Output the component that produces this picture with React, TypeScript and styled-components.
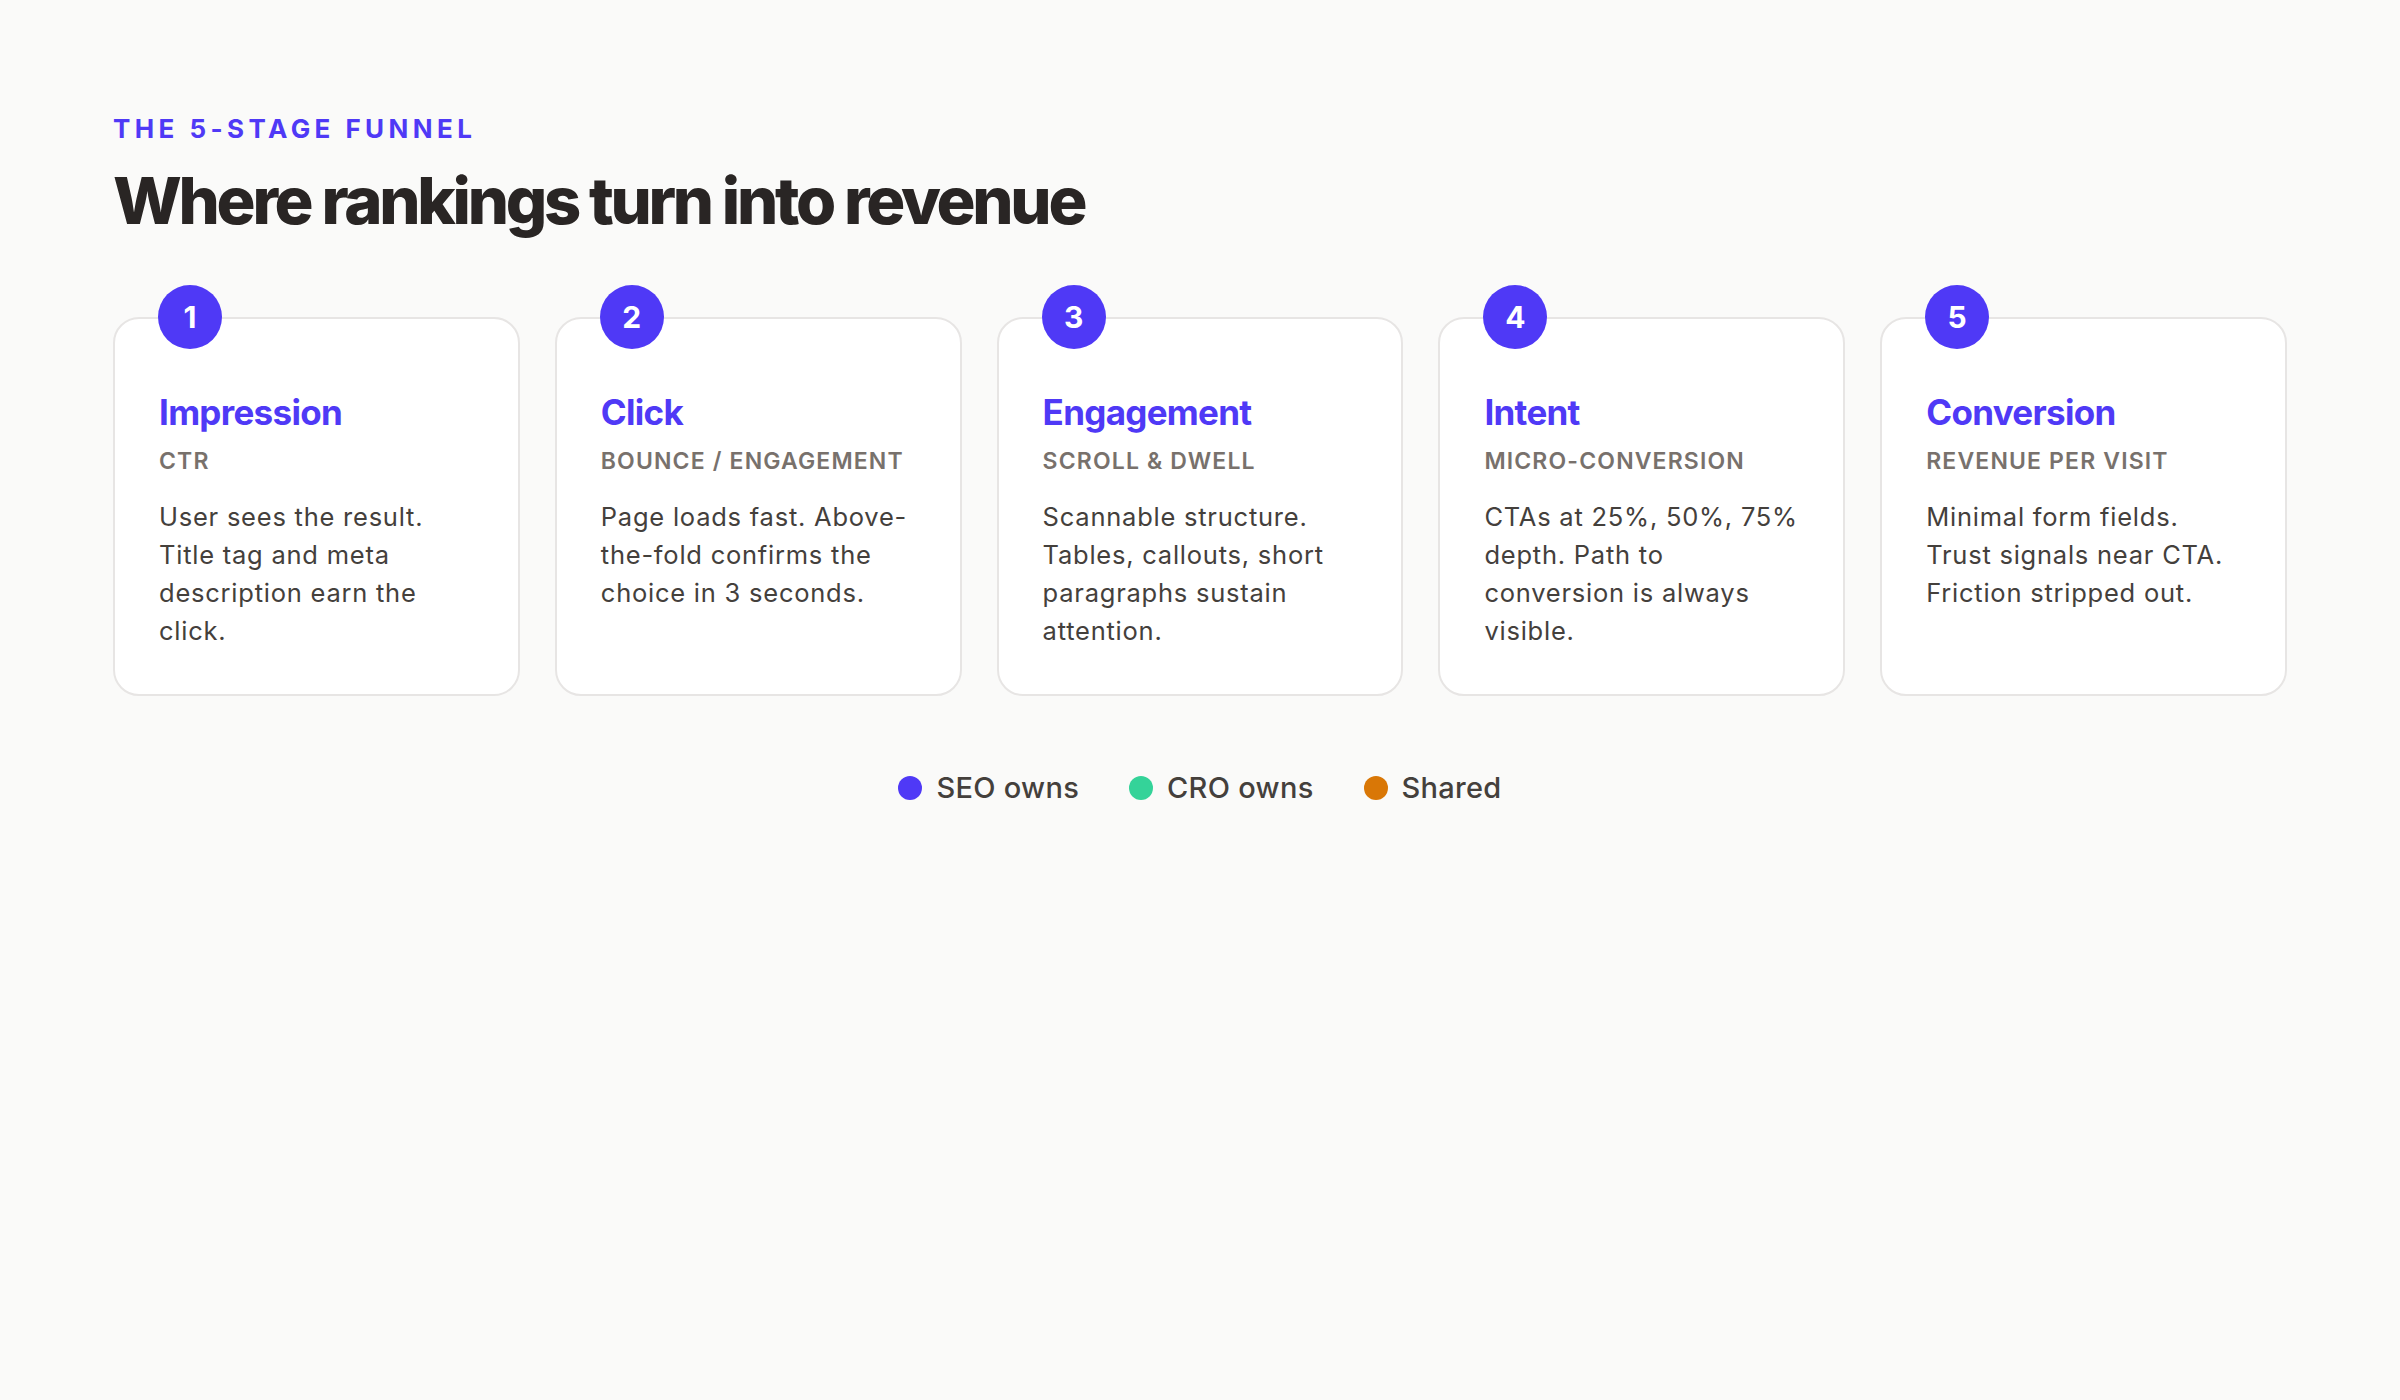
import styled, { createGlobalStyle } from "styled-components";

const Global = createGlobalStyle`
  body { margin: 0; background: #fafaf9; font-family: Inter, "Noto Sans", sans-serif; }
`;

const Page = styled.div`
  padding: 113px 113px;
  width: 2400px;
  box-sizing: border-box;
`;

const Kicker = styled.div`
  color: #4f39f6;
  font-size: 26px;
  font-weight: 700;
  letter-spacing: 0.17em;
  line-height: 32px;
`;

const Title = styled.h1`
  margin: 18px 0 0;
  color: #292524;
  font-size: 65px;
  font-weight: 800;
  letter-spacing: -0.05em;
  line-height: 76px;
`;

const Grid = styled.div`
  display: grid;
  grid-template-columns: repeat(5, 1fr);
  gap: 35px;
  margin-top: 78px;
`;

const Card = styled.div`
  position: relative;
  background: #fff;
  border: 2px solid #e7e5e4;
  border-radius: 26px;
  padding: 71px 44px 44px;
`;

const Badge = styled.div`
  position: absolute;
  top: -34px;
  left: 43px;
  width: 64px;
  height: 64px;
  border-radius: 50%;
  background: #4f39f6;
  color: #fff;
  font-size: 30px;
  font-weight: 700;
  display: flex;
  align-items: center;
  justify-content: center;
`;

const Heading = styled.h3`
  margin: 0;
  color: #4f39f6;
  font-size: 35px;
  font-weight: 700;
  letter-spacing: -0.02em;
  line-height: 44px;
`;

const Metric = styled.div`
  margin-top: 11px;
  color: #78716c;
  font-size: 23px;
  font-weight: 600;
  letter-spacing: 0.05em;
  line-height: 32px;
  white-space: nowrap;
`;

const Body = styled.p`
  margin: 21px 0 0;
  color: #44403c;
  font-size: 25.5px;
  line-height: 38px;
  letter-spacing: 0.03em;
`;

const Legend = styled.div`
  display: flex;
  justify-content: center;
  gap: 50px;
  margin-top: 74px;
`;

const LegendItem = styled.div`
  display: flex;
  align-items: center;
  gap: 14px;
  color: #44403c;
  font-size: 29px;
  font-weight: 500;
  letter-spacing: 0.01em;
`;

const Dot = styled.span<{ $c: string }>`
  width: 24px;
  height: 24px;
  border-radius: 50%;
  background: ${(p) => p.$c};
`;

const stages = [
  { t: "Impression", m: "CTR", b: "User sees the result. Title tag and meta description earn the click." },
  { t: "Click", m: "BOUNCE / ENGAGEMENT", b: "Page loads fast. Above-the-fold confirms the choice in 3 seconds." },
  { t: "Engagement", m: "SCROLL & DWELL", b: "Scannable structure. Tables, callouts, short paragraphs sustain attention." },
  { t: "Intent", m: "MICRO-CONVERSION", b: "CTAs at 25%, 50%, 75% depth. Path to conversion is always visible." },
  { t: "Conversion", m: "REVENUE PER VISIT", b: "Minimal form fields. Trust signals near CTA. Friction stripped out." },
];

const App = () => (
  <Page>
    <Global />
    <Kicker>THE 5-STAGE FUNNEL</Kicker>
    <Title>Where rankings turn into revenue</Title>
    <Grid>
      {stages.map((s, i) => (
        <Card key={s.t}>
          <Badge>{i + 1}</Badge>
          <Heading>{s.t}</Heading>
          <Metric>{s.m}</Metric>
          <Body>{s.b}</Body>
        </Card>
      ))}
    </Grid>
    <Legend>
      <LegendItem><Dot $c="#4f39f6" />SEO owns</LegendItem>
      <LegendItem><Dot $c="#34d399" />CRO owns</LegendItem>
      <LegendItem><Dot $c="#d97706" />Shared</LegendItem>
    </Legend>
  </Page>
);

export default App;
